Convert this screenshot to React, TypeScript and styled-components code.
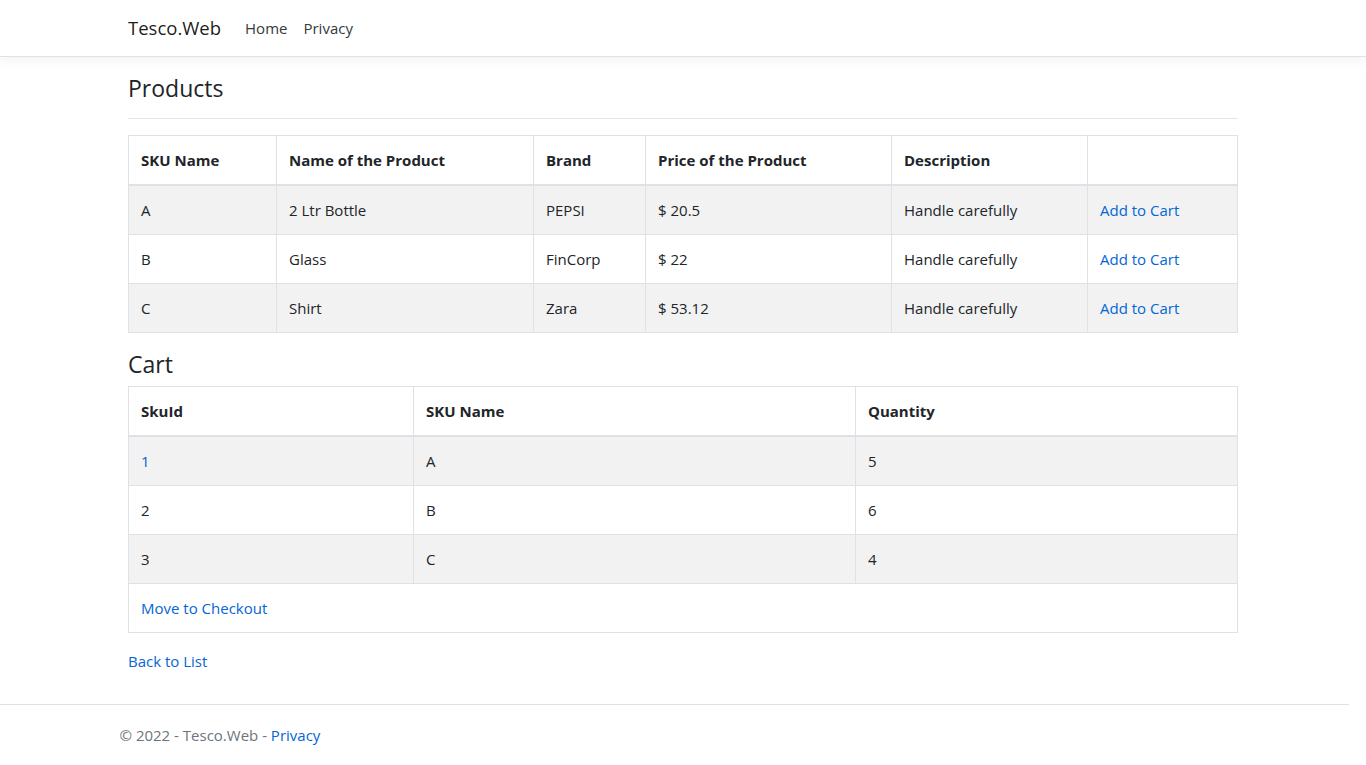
import React from 'react';
import styled, { createGlobalStyle } from 'styled-components';

const GlobalStyle = createGlobalStyle`
  html, body {
    margin: 0;
    padding: 0;
    background: #fff;
  }
  body {
    font-family: "Segoe UI", "Open Sans", "Liberation Sans", sans-serif;
    font-size: 15px;
    line-height: 24px;
    color: #212529;
  }
  * {
    box-sizing: border-box;
  }
`;

const Page = styled.div`
  min-height: 765px;
  display: flex;
  flex-direction: column;
`;

const NavBar = styled.nav`
  background: #fff;
  border-bottom: 1px solid #dee2e6;
  box-shadow: 0 4px 12px rgba(0, 0, 0, 0.05);
  padding: 8px 0;
  margin-bottom: 16px;
`;

const Container = styled.div`
  width: 1140px;
  margin: 0 auto;
  padding: 0 15px;
`;

const NavInner = styled(Container)`
  display: flex;
  align-items: center;
  height: 40px;
`;

const Brand = styled.a`
  font-size: 18.5px;
  line-height: 30px;
  color: rgba(0, 0, 0, 0.9);
  text-decoration: none;
  margin-right: 16px;
`;

const NavList = styled.div`
  display: flex;
`;

const NavLink = styled.a`
  padding: 8px;
  color: #343a40;
  text-decoration: none;
  font-size: 15px;
`;

const Main = styled(Container)`
  padding-bottom: 16px;
`;

const Heading = styled.h4`
  font-size: 23px;
  font-weight: 500;
  line-height: 28.8px;
  padding-top: 1px;
  margin: 0 0 7px;
`;

const Divider = styled.hr`
  border: 0;
  border-top: 1px solid rgba(0, 0, 0, 0.1);
  margin: 15px 0 16px;
`;

const Table = styled.table`
  width: 1110px;
  border-collapse: collapse;
  table-layout: fixed;
  margin-bottom: 16px;

  tbody tr:nth-of-type(odd) {
    background: rgba(0, 0, 0, 0.05);
  }
`;

const Col = styled.col<{ $w: number }>`
  width: ${p => p.$w}px;
`;

const Th = styled.th`
  text-align: left;
  font-weight: 700;
  padding: 12px;
  border: 1px solid #dee2e6;
  border-bottom-width: 2px;
  vertical-align: bottom;
`;

const Td = styled.td`
  padding: 12px;
  border: 1px solid #dee2e6;
  vertical-align: top;
`;

const Link = styled.a`
  color: #0366d6;
  text-decoration: none;
`;

const Footer = styled.footer`
  margin-top: auto;
  width: 1349px;
  border-top: 1px solid #dee2e6;
  line-height: 60px;
  color: #6c757d;
  white-space: nowrap;
`;

const products = [
  { sku: 'A', name: '2 Ltr Bottle', brand: 'PEPSI', price: '$ 20.5' },
  { sku: 'B', name: 'Glass', brand: 'FinCorp', price: '$ 22' },
  { sku: 'C', name: 'Shirt', brand: 'Zara', price: '$ 53.12' },
];

const cart = [
  { id: '1', sku: 'A', qty: '5', link: true },
  { id: '2', sku: 'B', qty: '6', link: false },
  { id: '3', sku: 'C', qty: '4', link: false },
];

export default function App() {
  return (
    <Page>
      <GlobalStyle />
      <NavBar>
        <NavInner>
          <Brand href="#">Tesco.Web</Brand>
          <NavList>
            <NavLink href="#">Home</NavLink>
            <NavLink href="#">Privacy</NavLink>
          </NavList>
        </NavInner>
      </NavBar>

      <Main>
        <Heading>Products</Heading>
        <Divider />
        <Table>
          <colgroup>
            <Col $w={148} />
            <Col $w={257} />
            <Col $w={112} />
            <Col $w={246} />
            <Col $w={196} />
            <Col $w={150} />
          </colgroup>
          <thead>
            <tr>
              <Th>SKU Name</Th>
              <Th>Name of the Product</Th>
              <Th>Brand</Th>
              <Th>Price of the Product</Th>
              <Th>Description</Th>
              <Th></Th>
            </tr>
          </thead>
          <tbody>
            {products.map(p => (
              <tr key={p.sku}>
                <Td>{p.sku}</Td>
                <Td>{p.name}</Td>
                <Td>{p.brand}</Td>
                <Td>{p.price}</Td>
                <Td>Handle carefully</Td>
                <Td>
                  <Link href="#">Add to Cart</Link>
                </Td>
              </tr>
            ))}
          </tbody>
        </Table>

        <Heading>Cart</Heading>
        <Table>
          <colgroup>
            <Col $w={285} />
            <Col $w={442} />
            <Col $w={382} />
          </colgroup>
          <thead>
            <tr>
              <Th>SkuId</Th>
              <Th>SKU Name</Th>
              <Th>Quantity</Th>
            </tr>
          </thead>
          <tbody>
            {cart.map(c => (
              <tr key={c.id}>
                <Td>{c.link ? <Link href="#">{c.id}</Link> : c.id}</Td>
                <Td>{c.sku}</Td>
                <Td>{c.qty}</Td>
              </tr>
            ))}
            <tr>
              <Td colSpan={3}>
                <Link href="#">Move to Checkout</Link>
              </Td>
            </tr>
          </tbody>
        </Table>

        <div>
          <Link href="#">Back to List</Link>
        </div>
      </Main>

      <Footer>
        <Container>
          &copy; 2022 - Tesco.Web - <Link href="#">Privacy</Link>
        </Container>
      </Footer>
    </Page>
  );
}
